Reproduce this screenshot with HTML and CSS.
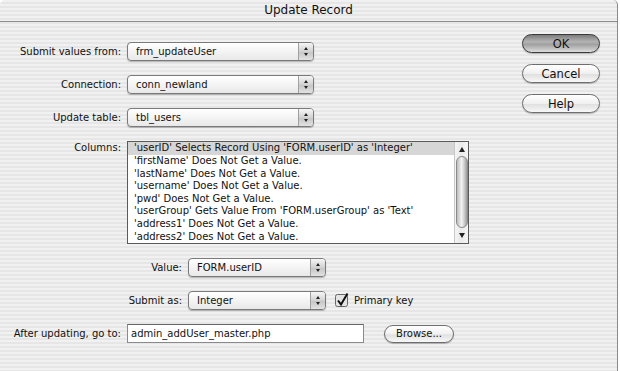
FILE: index.html
```html
<!DOCTYPE html>
<html lang="en">
<head>
    <meta charset="UTF-8">
    <title>Update Record</title>
    <link rel="stylesheet" href="styles.css">
</head>
<body>
    <div class="window">
        <div class="titlebar">Update Record</div>
        <div class="content">
            <div class="form">
                <div class="row">
                    <span class="lbl">Submit values from:</span>
                    <div class="select wide">frm_updateUser<span class="stepper"></span></div>
                </div>
                <div class="row">
                    <span class="lbl">Connection:</span>
                    <div class="select wide">conn_newland<span class="stepper"></span></div>
                </div>
                <div class="row">
                    <span class="lbl">Update table:</span>
                    <div class="select wide">tbl_users<span class="stepper"></span></div>
                </div>
                <div class="row list-row">
                    <span class="lbl">Columns:</span>
                    <div class="listbox">
                        <ul class="items">
                            <li class="selected">'userID' Selects Record Using 'FORM.userID' as 'Integer'</li>
                            <li>'firstName' Does Not Get a Value.</li>
                            <li>'lastName' Does Not Get a Value.</li>
                            <li>'username' Does Not Get a Value.</li>
                            <li>'pwd' Does Not Get a Value.</li>
                            <li>'userGroup' Gets Value From 'FORM.userGroup' as 'Text'</li>
                            <li>'address1' Does Not Get a Value.</li>
                            <li>'address2' Does Not Get a Value.</li>
                        </ul>
                        <div class="scrollbar">
                            <span class="arrow up"></span>
                            <span class="thumb"></span>
                            <span class="arrow down"></span>
                        </div>
                    </div>
                </div>
                <div class="row">
                    <span class="lbl indent">Value:</span>
                    <div class="select narrow">FORM.userID<span class="stepper"></span></div>
                </div>
                <div class="row">
                    <span class="lbl indent">Submit as:</span>
                    <div class="select narrow">Integer<span class="stepper"></span></div>
                    <span class="check">
                        <svg width="14" height="15" viewBox="0 0 14 15">
                            <rect x="0.5" y="1.5" width="12" height="12" rx="2" fill="#e4e4e4" stroke="#666"/>
                            <path d="M3 7.5 L6 11.5 L12.5 0.5" fill="none" stroke="#111" stroke-width="2"/>
                        </svg>
                    </span>
                    <span class="check-label">Primary key</span>
                </div>
                <div class="row">
                    <span class="lbl">After updating, go to:</span>
                    <div class="textfield">admin_addUser_master.php</div>
                    <button class="btn small">Browse...</button>
                </div>
            </div>
            <div class="actions">
                <button class="btn default">OK</button>
                <button class="btn">Cancel</button>
                <button class="btn">Help</button>
            </div>
        </div>
    </div>
</body>
</html>
```

FILE: styles.css
```css
body {
    margin: 0;
    background: #fff;
    font-family: "DejaVu Sans", sans-serif;
    font-size: 10px;
    color: #111;
}
.window {
    width: 617px;
    height: 371px;
    border-right: 1px solid #8a8a8a;
    border-radius: 5px 5px 0 0;
    background: repeating-linear-gradient(to bottom, #f1f1f1 0, #f1f1f1 2px, #e6e6e6 2px, #e6e6e6 4px);
    overflow: hidden;
}
.titlebar {
    height: 21px;
    line-height: 21px;
    text-align: center;
    font-size: 12px;
    border-bottom: 1px solid #8c8c8c;
}
.content {
    display: flex;
}
.form {
    display: flex;
    flex-direction: column;
    gap: 14px;
    padding-top: 20px;
    width: 522px;
}
.row {
    display: flex;
    align-items: center;
    height: 19px;
}
.lbl {
    width: 121px;
    text-align: right;
    padding-right: 6px;
    flex-shrink: 0;
}
.lbl.indent {
    width: 182px;
}
.list-row {
    height: 103px;
    align-items: flex-start;
}
.list-row .lbl {
    padding-top: 1px;
}
.select {
    position: relative;
    height: 17px;
    line-height: 17px;
    padding-left: 8px;
    border: 1px solid #7a7a7a;
    border-radius: 4px;
    background: linear-gradient(#ffffff, #f4f4f4 50%, #e8e8e8);
    box-shadow: 0 1px 1px rgba(0, 0, 0, 0.25);
    box-sizing: content-box;
}
.select.wide {
    width: 177px;
}
.select.narrow {
    width: 128px;
}
.stepper {
    position: absolute;
    right: 0;
    top: 0;
    width: 14px;
    height: 17px;
    border-left: 1px solid #a0a0a0;
    border-radius: 0 3px 3px 0;
    background: linear-gradient(#f6f6f6, #d2d2d2 50%, #c4c4c4 51%, #e2e2e2);
}
.stepper::before,
.stepper::after {
    content: "";
    position: absolute;
    left: 5px;
    border-left: 2px solid transparent;
    border-right: 2px solid transparent;
}
.stepper::before {
    top: 4px;
    border-bottom: 3px solid #222;
}
.stepper::after {
    top: 10px;
    border-top: 3px solid #222;
}
.listbox {
    display: flex;
    width: 340px;
    height: 101px;
    border: 1px solid #5a5a5a;
    background: #fff;
    overflow: hidden;
}
.items {
    list-style: none;
    margin: 0;
    padding: 0;
    flex: 1;
}
.items li {
    height: 12.6px;
    line-height: 12.6px;
    padding-left: 6px;
    white-space: nowrap;
    overflow: hidden;
}
.items li.selected {
    background: #d6d6d6;
    height: 13px;
}
.scrollbar {
    position: relative;
    width: 13px;
    border-left: 1px solid #c8c8c8;
    background: repeating-linear-gradient(to right, #f4f4f4 0, #eaeaea 6px, #f4f4f4 12px);
}
.arrow {
    position: absolute;
    left: 4px;
    border-left: 3px solid transparent;
    border-right: 3px solid transparent;
}
.arrow.up {
    top: 5px;
    border-bottom: 5px solid #222;
}
.arrow.down {
    bottom: 5px;
    border-top: 5px solid #222;
}
.thumb {
    position: absolute;
    left: 1px;
    top: 14px;
    width: 10px;
    height: 70px;
    border: 1px solid #8a8a8a;
    border-radius: 6px;
    background: linear-gradient(to right, #bdbdbd, #f2f2f2 45%, #d2d2d2 70%, #9c9c9c);
}
.check {
    display: flex;
    margin-left: 9px;
}
.check-label {
    margin-left: 5px;
}
.textfield {
    width: 232px;
    height: 17px;
    line-height: 17px;
    padding-left: 3px;
    border: 1px solid #8a8a8a;
    border-top-color: #666;
    background: #fff;
    box-sizing: content-box;
}
.actions {
    display: flex;
    flex-direction: column;
    gap: 11px;
    padding-top: 12px;
}
.btn {
    width: 78px;
    height: 19px;
    padding: 0;
    border: 1px solid #6e6e6e;
    border-radius: 10px;
    font-family: "DejaVu Sans", sans-serif;
    font-size: 11.5px;
    color: #111;
    background: linear-gradient(#ffffff, #f0f0f0 50%, #e0e0e0 55%, #f8f8f8);
    box-shadow: 0 1px 1px rgba(0, 0, 0, 0.25);
}
.btn.default {
    border-color: #3a3a3a;
    background: linear-gradient(#7c7c7c, #b4b4b4 40%, #a0a0a0 55%, #dcdcdc);
}
.btn.small {
    width: 70px;
    height: 18px;
    margin-left: 20px;
    font-size: 10px;
}
```
